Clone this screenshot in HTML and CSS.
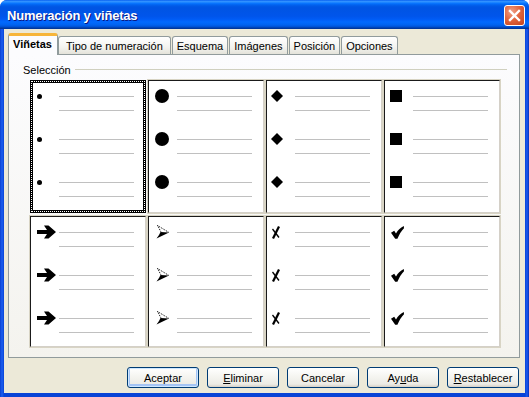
FILE: index.html
```html
<!DOCTYPE html>
<html lang="es">
<head>
<meta charset="utf-8">
<title>Numeración y viñetas</title>
<link rel="stylesheet" href="styles.css">
</head>
<body>
<div class="window">
  <div class="titlebar">
    <span class="title">Numeración y viñetas</span>
    <span class="close">
      <svg width="13" height="13" viewBox="0 0 13 13"><path d="M2 2L11 11M11 2L2 11" stroke="#fff" stroke-width="2.4" stroke-linecap="square"/></svg>
    </span>
  </div>
  <div class="client">
    <div class="tabs">
      <div class="tab active">Viñetas</div>
      <div class="tab t-wide">Tipo de numeración</div>
      <div class="tab">Esquema</div>
      <div class="tab">Imágenes</div>
      <div class="tab">Posición</div>
      <div class="tab">Opciones</div>
    </div>
    <div class="panel">
      <div class="legend"><span>Selección</span><span class="rule"></span></div>
      <div class="grid">
        <div class="cell selected">
          <div class="item"><div class="mark m-dot"><span class="dot"></span></div><div class="lines"><div class="line"></div><div class="line"></div></div></div>
          <div class="item"><div class="mark m-dot"><span class="dot"></span></div><div class="lines"><div class="line"></div><div class="line"></div></div></div>
          <div class="item"><div class="mark m-dot"><span class="dot"></span></div><div class="lines"><div class="line"></div><div class="line"></div></div></div>
        </div>
        <div class="cell">
          <div class="item"><div class="mark m-circle"><span class="circle"></span></div><div class="lines"><div class="line"></div><div class="line"></div></div></div>
          <div class="item"><div class="mark m-circle"><span class="circle"></span></div><div class="lines"><div class="line"></div><div class="line"></div></div></div>
          <div class="item"><div class="mark m-circle"><span class="circle"></span></div><div class="lines"><div class="line"></div><div class="line"></div></div></div>
        </div>
        <div class="cell">
          <div class="item"><div class="mark m-diamond"><svg width="12" height="12" viewBox="0 0 12 12"><path d="M6 0L12 6L6 12L0 6Z"/></svg></div><div class="lines"><div class="line"></div><div class="line"></div></div></div>
          <div class="item"><div class="mark m-diamond"><svg width="12" height="12" viewBox="0 0 12 12"><path d="M6 0L12 6L6 12L0 6Z"/></svg></div><div class="lines"><div class="line"></div><div class="line"></div></div></div>
          <div class="item"><div class="mark m-diamond"><svg width="12" height="12" viewBox="0 0 12 12"><path d="M6 0L12 6L6 12L0 6Z"/></svg></div><div class="lines"><div class="line"></div><div class="line"></div></div></div>
        </div>
        <div class="cell">
          <div class="item"><div class="mark m-square"><span class="square"></span></div><div class="lines"><div class="line"></div><div class="line"></div></div></div>
          <div class="item"><div class="mark m-square"><span class="square"></span></div><div class="lines"><div class="line"></div><div class="line"></div></div></div>
          <div class="item"><div class="mark m-square"><span class="square"></span></div><div class="lines"><div class="line"></div><div class="line"></div></div></div>
        </div>

        <div class="cell">
          <div class="item"><div class="mark m-arrow"><svg width="20" height="14" viewBox="0 0 20 14"><path d="M0 5H10L7 0.5H11.5L19 7L11.5 13.5H7L10 9H0Z"/></svg></div><div class="lines"><div class="line"></div><div class="line"></div></div></div>
          <div class="item"><div class="mark m-arrow"><svg width="20" height="14" viewBox="0 0 20 14"><path d="M0 5H10L7 0.5H11.5L19 7L11.5 13.5H7L10 9H0Z"/></svg></div><div class="lines"><div class="line"></div><div class="line"></div></div></div>
          <div class="item"><div class="mark m-arrow"><svg width="20" height="14" viewBox="0 0 20 14"><path d="M0 5H10L7 0.5H11.5L19 7L11.5 13.5H7L10 9H0Z"/></svg></div><div class="lines"><div class="line"></div><div class="line"></div></div></div>
        </div>
        <div class="cell">
          <div class="item"><div class="mark m-head"><svg width="14" height="14" viewBox="0 0 14 14"><path d="M1.5 0.5L13 7.5M1.5 0.5L5 7" stroke="#000" stroke-width="1" stroke-dasharray="1 1" fill="none"/><path d="M4.5 7L13 7.5L0.5 13.5L3 10Z"/></svg></div><div class="lines"><div class="line"></div><div class="line"></div></div></div>
          <div class="item"><div class="mark m-head"><svg width="14" height="14" viewBox="0 0 14 14"><path d="M1.5 0.5L13 7.5M1.5 0.5L5 7" stroke="#000" stroke-width="1" stroke-dasharray="1 1" fill="none"/><path d="M4.5 7L13 7.5L0.5 13.5L3 10Z"/></svg></div><div class="lines"><div class="line"></div><div class="line"></div></div></div>
          <div class="item"><div class="mark m-head"><svg width="14" height="14" viewBox="0 0 14 14"><path d="M1.5 0.5L13 7.5M1.5 0.5L5 7" stroke="#000" stroke-width="1" stroke-dasharray="1 1" fill="none"/><path d="M4.5 7L13 7.5L0.5 13.5L3 10Z"/></svg></div><div class="lines"><div class="line"></div><div class="line"></div></div></div>
        </div>
        <div class="cell">
          <div class="item"><div class="mark m-x"><svg width="10" height="13" viewBox="0 0 10 13"><path d="M8 0.5L2 12.5" stroke="#000" stroke-width="2.2"/><path d="M1.5 3L8 11.5" stroke="#000" stroke-width="1.3"/></svg></div><div class="lines"><div class="line"></div><div class="line"></div></div></div>
          <div class="item"><div class="mark m-x"><svg width="10" height="13" viewBox="0 0 10 13"><path d="M8 0.5L2 12.5" stroke="#000" stroke-width="2.2"/><path d="M1.5 3L8 11.5" stroke="#000" stroke-width="1.3"/></svg></div><div class="lines"><div class="line"></div><div class="line"></div></div></div>
          <div class="item"><div class="mark m-x"><svg width="10" height="13" viewBox="0 0 10 13"><path d="M8 0.5L2 12.5" stroke="#000" stroke-width="2.2"/><path d="M1.5 3L8 11.5" stroke="#000" stroke-width="1.3"/></svg></div><div class="lines"><div class="line"></div><div class="line"></div></div></div>
        </div>
        <div class="cell">
          <div class="item"><div class="mark m-check"><svg width="13" height="13" viewBox="0 0 13 13"><path d="M0 6.8L3.2 4.8L5 7.5Q7.5 2.5 12.8 0L13 2.2Q9.5 5.5 6.4 12.8H4.2Z"/></svg></div><div class="lines"><div class="line"></div><div class="line"></div></div></div>
          <div class="item"><div class="mark m-check"><svg width="13" height="13" viewBox="0 0 13 13"><path d="M0 6.8L3.2 4.8L5 7.5Q7.5 2.5 12.8 0L13 2.2Q9.5 5.5 6.4 12.8H4.2Z"/></svg></div><div class="lines"><div class="line"></div><div class="line"></div></div></div>
          <div class="item"><div class="mark m-check"><svg width="13" height="13" viewBox="0 0 13 13"><path d="M0 6.8L3.2 4.8L5 7.5Q7.5 2.5 12.8 0L13 2.2Q9.5 5.5 6.4 12.8H4.2Z"/></svg></div><div class="lines"><div class="line"></div><div class="line"></div></div></div>
        </div>
      </div>
    </div>
    <div class="buttons">
      <button class="btn default">Aceptar</button>
      <button class="btn"><u>E</u>liminar</button>
      <button class="btn">Cancelar</button>
      <button class="btn">Ay<u>u</u>da</button>
      <button class="btn"><u>R</u>establecer</button>
    </div>
  </div>
</div>
</body>
</html>
```

FILE: styles.css
```css
* { box-sizing: border-box; }
html, body { margin: 0; padding: 0; }
body {
  width: 529px;
  height: 397px;
  overflow: hidden;
  font-family: "Liberation Sans", Arial, sans-serif;
  font-size: 11px;
  color: #000;
}
.window {
  width: 529px;
  height: 397px;
  display: flex;
  flex-direction: column;
  background: linear-gradient(to right, #0a3fd0 0, #1c5ff0 2px, #0843d6 4px, #0843d6 525px, #1a5af0 527px, #0630b8 529px);
  border-radius: 7px 7px 0 0;
}
.titlebar {
  height: 29px;
  flex: none;
  display: flex;
  align-items: center;
  justify-content: space-between;
  padding: 0 4px 0 7px;
  border-radius: 7px 7px 0 0;
  background: linear-gradient(to bottom, #0058ee 0%, #3593ff 4%, #288eff 7%, #127dff 10%, #036ffc 13%, #0262ee 17%, #0057e5 23%, #0054e3 28%, #0055eb 56%, #005bf5 66%, #026afe 76%, #0062ef 86%, #0052d6 92%, #0040ab 96%, #003092 100%);
}
.title {
  color: #fff;
  font-weight: bold;
  font-size: 13px;
  letter-spacing: -0.2px;
  text-shadow: 1px 1px 0 #0a1883;
  padding-top: 1px;
}
.close {
  width: 21px;
  height: 21px;
  border: 1px solid #fff;
  border-radius: 3px;
  display: flex;
  align-items: center;
  justify-content: center;
  background: radial-gradient(circle at 35% 30%, #f0a088 0%, #e2663f 45%, #c4421c 100%);
  margin-top: 1px;
}
.client {
  flex: 1;
  margin: 0 4px 4px 4px;
  background: #ece9d8;
  padding: 4px 5px 0 4px;
  display: flex;
  flex-direction: column;
}
.tabs {
  display: flex;
  align-items: flex-end;
  height: 21px;
  position: relative;
  z-index: 1;
}
.tab {
  height: 18px;
  padding: 3px 4px 0 4px;
  border: 1px solid #919b9c;
  border-bottom: none;
  border-radius: 3px 3px 0 0;
  background: linear-gradient(to bottom, #ffffff, #f3f3ef 60%, #e4e3da);
  margin-right: 1px;
  white-space: nowrap;
}
.tab.t-wide { padding: 3px 7px 0 7px; }
.tab.active {
  height: 22px;
  margin-bottom: -1px;
  font-weight: bold;
  background: #fcfcfe;
  border-top: 3px solid #f7b53a;
  padding: 2px 5px 0 4px;
  margin-right: -1px;
}
.tab.active + .tab { margin-left: 1px; }
.panel {
  width: 512px;
  height: 304px;
  border: 1px solid #919b9c;
  background: linear-gradient(to bottom, #fcfcfe, #f4f3ee);
  display: flex;
  flex-direction: column;
}
.legend {
  display: flex;
  align-items: center;
  gap: 4px;
  margin: 8px 12px 0 14px;
  height: 13px;
}
.rule {
  flex: 1;
  height: 1px;
  background: #d0d0bf;
  margin-top: -1px;
}
.grid {
  margin: 4px 0 0 21px;
  display: grid;
  grid-template-columns: repeat(4, 116px);
  grid-template-rows: 133px 131px;
  column-gap: 2px;
  row-gap: 3px;
}
.cell {
  background: #fff;
  border: 1px solid;
  border-color: #1a1a1a #d4d0c8 #d4d0c8 #1a1a1a;
  box-shadow: 0 0 0 1px #d8d4c4;
  padding: 7px 0 0 3px;
}
.cell.selected {
  border: 3px solid #000;
  outline: 1px dotted #fff;
  outline-offset: -2px;
  padding: 5px 0 0 1px;
  box-shadow: none;
}
.item {
  height: 43px;
  display: grid;
  grid-template-columns: 25px 75px;
}
.mark {
  height: 16px;
  display: flex;
  align-items: center;
}
.mark svg { display: block; fill: #000; }
.lines { padding-top: 8px; }
.line {
  height: 1px;
  background: #c0c0c0;
  margin-bottom: 13px;
}
.dot { width: 5px; height: 5px; border-radius: 50%; background: #000; margin-left: 3px; }
.circle { width: 14px; height: 14px; border-radius: 50%; background: #000; margin-left: 3px; }
.m-diamond svg { margin-left: 1px; }
.square { width: 12px; height: 12px; background: #000; margin-left: 2px; }
.m-arrow svg { margin-left: 3px; }
.m-head svg { margin-left: 4px; }
.m-x svg { margin-left: 1px; }
.m-check svg { margin-left: 3px; }
.buttons {
  display: flex;
  justify-content: flex-end;
  gap: 8px;
  margin-top: 9px;
  padding-right: 1px;
}
.btn {
  width: 72px;
  height: 21px;
  font-family: "Liberation Sans", Arial, sans-serif;
  font-size: 11px;
  color: #000;
  border: 1px solid #003c74;
  border-radius: 3px;
  background: linear-gradient(to bottom, #ffffff 0%, #f6f6f2 40%, #ecebe5 85%, #d6d0c5 100%);
  padding: 0;
}
.btn.default {
  box-shadow: inset 0 0 0 1px #cee7ff, inset 0 -1px 0 2px #a4c4f4;
}
```
